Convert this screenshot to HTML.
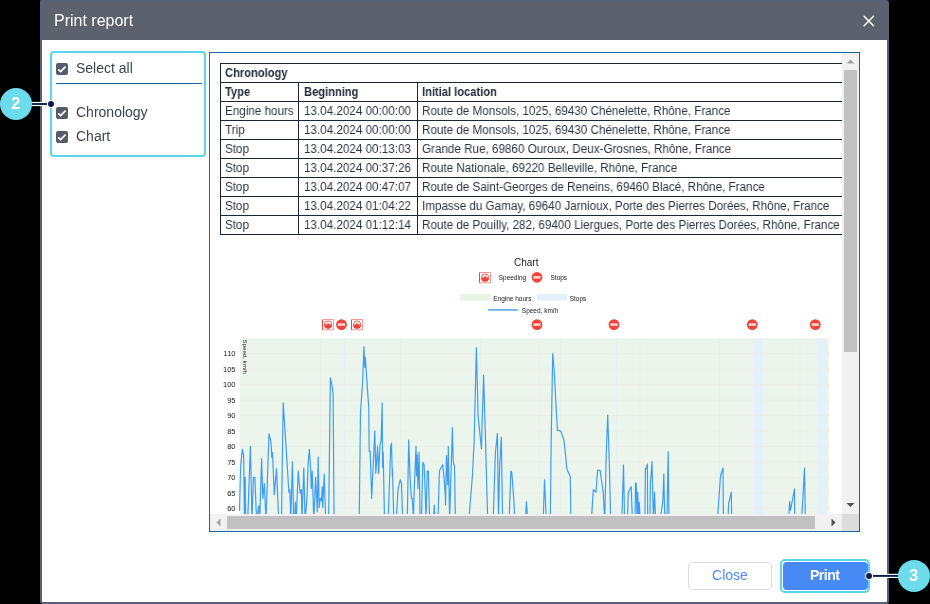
<!DOCTYPE html>
<html><head><meta charset="utf-8">
<style>
*{box-sizing:border-box;margin:0;padding:0}
html,body{width:930px;height:604px;overflow:hidden;background:#000;font-family:"Liberation Sans",sans-serif}
.lbl,.tt,.tb,#title,.btn,svg{will-change:transform}
.abs{position:absolute}
#dlg{position:absolute;left:40px;top:0;width:849px;height:604px;background:#fff;border:2px solid #56617a;border-radius:1px 3px 3px 3px}
#hdr{position:absolute;left:0;top:0;width:845px;height:38px;background:#5c626d}
#title{position:absolute;left:12px;top:9px;font-size:16px;color:#fff;line-height:20px}
#opts{position:absolute;left:50px;top:51px;width:156px;height:106px;border:2px solid #5ad5e9;border-radius:4px}
.cb{position:absolute;width:12px;height:12px;background:#555d6b;border-radius:2px}
.lbl{position:absolute;font-size:14px;color:#3c4350;line-height:16px}
#frame{position:absolute;left:209px;top:52px;width:651px;height:480px;border:1px solid #1565a3;overflow:hidden;background:#fff}
table{border-collapse:collapse;position:absolute;left:10px;top:10px;font-size:12px;color:#1f2a3a}
td,th{border:1px solid #1b2538;height:19px;padding:0 4px;white-space:nowrap;text-align:left;font-weight:400}
th{font-weight:700}
.btn{position:absolute;font-size:14px;text-align:center;border-radius:4px}

#inner{position:absolute;left:-210px;top:-53px;width:930px;height:604px}
.hl{position:absolute;left:220px;width:700px;height:1px;background:#1b2538}
.vl{position:absolute;width:1px;background:#1b2538}
.tt,.tb{position:absolute;height:19px;line-height:20px;font-size:12.3px;color:#2c3444;white-space:nowrap;transform:scaleX(0.948);transform-origin:0 0}
.tb{font-weight:700;transform:scaleX(0.905);color:#222b3a}
.sb{position:absolute;background:#f1f1f1}
</style></head><body>
<div id="dlg">
  <div id="hdr"><div id="title">Print report</div>
    <svg class="abs" style="left:819px;top:12px" width="16" height="16"><path d="M3.1 2.3L12.5 11.7M12.5 2.3L3.1 11.7" stroke="#fff" stroke-width="1.5" stroke-linecap="round"/></svg>
  </div>
</div>
<div id="opts"></div>
<div class="cb" style="left:56px;top:63px"></div><svg class="abs" style="left:56px;top:63px" width="12" height="12"><path d="M2.2 6.4L4.6 8.6L9.6 3.6" fill="none" stroke="#fff" stroke-width="1.8"/></svg>
<div class="lbl" style="left:76px;top:60px">Select all</div>
<div class="abs" style="left:56px;top:83px;width:146px;height:1.4px;background:#1a62a0"></div>
<div class="cb" style="left:56px;top:107px"></div><svg class="abs" style="left:56px;top:107px" width="12" height="12"><path d="M2.2 6.4L4.6 8.6L9.6 3.6" fill="none" stroke="#fff" stroke-width="1.8"/></svg>
<div class="lbl" style="left:76px;top:104px">Chronology</div>
<div class="cb" style="left:56px;top:131px"></div><svg class="abs" style="left:56px;top:131px" width="12" height="12"><path d="M2.2 6.4L4.6 8.6L9.6 3.6" fill="none" stroke="#fff" stroke-width="1.8"/></svg>
<div class="lbl" style="left:76px;top:128px">Chart</div>

<div id="frame"><div id="inner">
<div class="hl" style="top:63px"></div>
<div class="hl" style="top:82px"></div>
<div class="hl" style="top:101px"></div>
<div class="hl" style="top:120px"></div>
<div class="hl" style="top:139px"></div>
<div class="hl" style="top:158px"></div>
<div class="hl" style="top:177px"></div>
<div class="hl" style="top:196px"></div>
<div class="hl" style="top:215px"></div>
<div class="hl" style="top:234px"></div>
<div class="vl" style="left:220px;top:63px;height:172px"></div>
<div class="vl" style="left:298px;top:82px;height:153px"></div>
<div class="vl" style="left:417px;top:82px;height:153px"></div>
<div class="tb" style="left:225px;top:63px">Chronology</div>
<div class="tb" style="left:225px;top:82px">Type</div>
<div class="tb" style="left:304px;top:82px">Beginning</div>
<div class="tb" style="left:422px;top:82px">Initial location</div>
<div class="tt" style="left:225px;top:101px">Engine hours</div>
<div class="tt" style="left:304px;top:101px">13.04.2024 00:00:00</div>
<div class="tt" style="left:422px;top:101px">Route de Monsols, 1025, 69430 Chénelette, Rhône, France</div>
<div class="tt" style="left:225px;top:120px">Trip</div>
<div class="tt" style="left:304px;top:120px">13.04.2024 00:00:00</div>
<div class="tt" style="left:422px;top:120px">Route de Monsols, 1025, 69430 Chénelette, Rhône, France</div>
<div class="tt" style="left:225px;top:139px">Stop</div>
<div class="tt" style="left:304px;top:139px">13.04.2024 00:13:03</div>
<div class="tt" style="left:422px;top:139px">Grande Rue, 69860 Ouroux, Deux-Grosnes, Rhône, France</div>
<div class="tt" style="left:225px;top:158px">Stop</div>
<div class="tt" style="left:304px;top:158px">13.04.2024 00:37:26</div>
<div class="tt" style="left:422px;top:158px">Route Nationale, 69220 Belleville, Rhône, France</div>
<div class="tt" style="left:225px;top:177px">Stop</div>
<div class="tt" style="left:304px;top:177px">13.04.2024 00:47:07</div>
<div class="tt" style="left:422px;top:177px">Route de Saint-Georges de Reneins, 69460 Blacé, Rhône, France</div>
<div class="tt" style="left:225px;top:196px">Stop</div>
<div class="tt" style="left:304px;top:196px">13.04.2024 01:04:22</div>
<div class="tt" style="left:422px;top:196px">Impasse du Gamay, 69640 Jarnioux, Porte des Pierres Dorées, Rhône, France</div>
<div class="tt" style="left:225px;top:215px">Stop</div>
<div class="tt" style="left:304px;top:215px">13.04.2024 01:12:14</div>
<div class="tt" style="left:422px;top:215px">Route de Pouilly, 282, 69400 Liergues, Porte des Pierres Dorées, Rhône, France</div>
<!--CHART-->
<svg class="abs" style="left:0;top:0" width="930" height="604">
<rect x="240" y="338.3" width="589" height="190" fill="#ecf5eb"/>
<rect x="343.8" y="338.3" width="1.0" height="190" fill="#e4f1fb"/>
<rect x="538.8" y="338.3" width="1.0" height="190" fill="#e4f1fb"/>
<rect x="615.8" y="338.3" width="1.0" height="190" fill="#e4f1fb"/>
<rect x="754.3" y="338.3" width="8.9" height="190" fill="#e4f1fb"/>
<rect x="817.9" y="338.3" width="8.4" height="190" fill="#e4f1fb"/>
<rect x="240" y="507.80" width="590" height="1" fill="#eaeee8"/>
<rect x="240" y="492.35" width="590" height="1" fill="#eaeee8"/>
<rect x="240" y="476.90" width="590" height="1" fill="#eaeee8"/>
<rect x="240" y="461.45" width="590" height="1" fill="#eaeee8"/>
<rect x="240" y="446.00" width="590" height="1" fill="#eaeee8"/>
<rect x="240" y="430.55" width="590" height="1" fill="#eaeee8"/>
<rect x="240" y="415.10" width="590" height="1" fill="#eaeee8"/>
<rect x="240" y="399.65" width="590" height="1" fill="#eaeee8"/>
<rect x="240" y="384.20" width="590" height="1" fill="#eaeee8"/>
<rect x="240" y="368.75" width="590" height="1" fill="#eaeee8"/>
<rect x="240" y="353.30" width="590" height="1" fill="#eaeee8"/>
<rect x="320.1" y="338.3" width="1" height="190" fill="#e8efe7"/>
<rect x="400.0" y="338.3" width="1" height="190" fill="#e8efe7"/>
<rect x="479.9" y="338.3" width="1" height="190" fill="#e8efe7"/>
<rect x="559.8" y="338.3" width="1" height="190" fill="#e8efe7"/>
<rect x="639.5" y="338.3" width="1" height="190" fill="#e8efe7"/>
<rect x="719.1" y="338.3" width="1" height="190" fill="#e8efe7"/>
<rect x="799.5" y="338.3" width="1" height="190" fill="#e8efe7"/>
<text x="235.5" y="510.9" text-anchor="end" font-size="7.5" fill="#1a1a1a">60</text>
<text x="235.5" y="495.5" text-anchor="end" font-size="7.5" fill="#1a1a1a">65</text>
<text x="235.5" y="480.0" text-anchor="end" font-size="7.5" fill="#1a1a1a">70</text>
<text x="235.5" y="464.6" text-anchor="end" font-size="7.5" fill="#1a1a1a">75</text>
<text x="235.5" y="449.1" text-anchor="end" font-size="7.5" fill="#1a1a1a">80</text>
<text x="235.5" y="433.7" text-anchor="end" font-size="7.5" fill="#1a1a1a">85</text>
<text x="235.5" y="418.2" text-anchor="end" font-size="7.5" fill="#1a1a1a">90</text>
<text x="235.5" y="402.8" text-anchor="end" font-size="7.5" fill="#1a1a1a">95</text>
<text x="235.5" y="387.3" text-anchor="end" font-size="7.5" fill="#1a1a1a">100</text>
<text x="235.5" y="371.9" text-anchor="end" font-size="7.5" fill="#1a1a1a">105</text>
<text x="235.5" y="356.4" text-anchor="end" font-size="7.5" fill="#1a1a1a">110</text>
<text transform="translate(242.8,339.6) rotate(90)" font-size="6.1" fill="#1a1a1a">Speed, km/h</text>
<clipPath id="pc"><rect x="239" y="338" width="592" height="176"/></clipPath>
<polyline clip-path="url(#pc)" points="239.5,510.8 240.5,468.6 242.3,449.3 243.6,454.9 244.5,520.0 245.2,477.3 245.7,520.0 247.7,520.0 249.2,479.8 250.4,446.2 251.0,471.0 251.9,520.0 253.5,477.3 254.8,477.3 256.6,520.0 258.9,505.8 259.7,520.0 261.6,458.6 262.8,498.4 264.3,483.5 266.0,520.0 269.0,433.8 270.9,441.2 271.8,457.4 272.5,452.4 274.3,494.7 276.5,468.6 278.7,520.0 281.5,520.0 283.2,402.8 285.8,442.5 288.9,492.2 289.9,489.7 290.8,520.0 292.4,461.7 293.7,520.0 294.6,520.0 295.4,502.1 296.2,520.0 298.2,471.0 300.1,493.4 301.4,489.7 302.0,520.0 303.8,468.0 305.1,520.0 306.9,499.6 308.2,461.7 309.4,449.3 310.7,471.0 311.3,488.4 312.2,471.0 313.8,520.0 315.6,477.3 317.3,512.0 318.2,457.0 319.2,507.7 320.2,498.4 321.5,500.9 322.3,486.6 322.7,507.7 324.2,474.2 325.7,520.0 328.6,520.0 330.4,377.8 331.8,384.7 333.1,393.3 334.1,520.0 359.2,520.0 360.5,412.3 362.7,381.3 363.9,346.9 364.8,367.5 365.3,357.2 368.8,408.8 369.2,451.2 370.2,451.2 371.7,498.4 374.8,430.8 375.8,473.5 377.6,446.2 378.6,473.5 380.1,443.7 381.1,441.2 382.2,402.8 382.6,467.3 383.2,452.4 384.5,520.0 388.2,520.0 390.7,446.2 391.5,443.1 392.3,476.0 392.5,468.6 393.8,520.0 396.3,520.0 398.0,489.7 400.2,479.8 401.5,483.5 402.7,520.0 407.3,520.0 408.7,440.0 410.2,479.8 411.4,498.4 412.3,498.4 413.5,520.0 414.1,493.4 416.0,446.2 416.6,476.0 417.3,454.9 417.9,488.4 419.1,452.4 420.1,520.0 421.5,520.0 422.8,462.4 424.1,464.8 425.1,488.4 426.0,520.0 427.2,471.0 428.4,471.0 429.1,502.1 429.7,520.0 433.4,520.0 434.3,505.2 435.0,520.0 438.0,520.0 439.4,471.0 442.7,464.8 444.0,477.3 445.2,493.4 445.6,505.0 446.4,455.5 447.7,484.7 448.3,446.2 449.6,520.0 452.4,427.6 453.3,462.4 454.5,466.1 455.4,520.0 468.8,520.0 472.5,474.8 474.1,442.0 476.4,347.5 478.1,415.5 480.5,440.0 481.5,448.7 482.0,427.6 483.6,375.0 485.5,440.0 487.7,520.0 493.2,520.0 495.4,452.4 497.4,433.6 498.5,520.0 499.7,464.8 501.3,437.0 502.6,520.0 509.1,520.0 510.9,471.0 511.8,472.3 514.0,502.1 514.6,520.0 525.5,520.0 526.4,501.5 527.7,520.0 543.2,520.0 544.5,479.8 546.3,520.0 550.3,520.0 551.2,440.2 552.7,353.6 554.0,368.2 557.4,430.4 560.7,430.9 564.0,440.2 565.9,458.6 566.9,469.2 570.3,476.6 570.9,520.0 591.4,520.0 593.3,489.7 596.0,492.2 597.6,470.4 600.1,470.4 603.2,492.2 604.7,520.0 606.3,452.4 607.7,415.2 609.2,458.6 610.7,520.0 621.8,520.0 623.5,464.8 624.6,520.0 627.4,520.0 628.3,492.2 631.2,486.6 632.4,520.0 635.0,520.0 635.5,482.9 636.2,483.5 637.1,520.0 637.7,492.2 638.7,520.0 639.2,502.1 640.2,520.0 644.9,520.0 645.4,468.6 646.4,468.6 647.4,464.2 647.7,520.0 649.9,520.0 650.4,483.5 652.0,461.7 653.4,520.0 654.5,492.2 655.7,520.0 660.1,520.0 662.8,502.1 663.8,474.2 664.8,520.0 666.9,520.0 668.2,451.8 669.0,520.0 717.4,520.0 720.5,476.0 723.0,468.0 723.4,520.0 728.0,520.0 728.6,503.4 731.3,492.2 731.7,520.0 788.6,520.0 789.6,501.5 790.5,510.2 794.5,489.1 794.8,520.0 801.7,520.0 804.5,468.0 805.4,520.0 829.0,520.0" fill="none" stroke="#3d9df4" stroke-width="1.2" stroke-linejoin="round"/>
</svg>
<svg class="abs" style="left:0;top:0" width="930" height="604" font-family="Liberation Sans">
<text x="526.2" y="266" text-anchor="middle" font-size="10" fill="#222">Chart</text>
<path d="M479.5 272.5V283" stroke="#f0443a" stroke-width="1"/><path d="M479.5 272.5H490.5V282.8H479.5" fill="none" stroke="#f48a83" stroke-width="0.9"/><circle cx="485.1" cy="277.5" r="3.6" fill="#fff" stroke="#f0443a" stroke-width="0.9"/><path d="M481.20000000000005 277.8L483.1 277.6L484.20000000000005 276.9L485.1 275.5L486.0 276.9L487.1 277.6L489.0 277.8A3.9 3.9 0 0 1 481.20000000000005 277.8Z" fill="#f0443a"/>
<text x="498.7" y="280" font-size="6.5" fill="#1a1a1a">Speeding</text>
<circle cx="537" cy="277.3" r="5.4" fill="#f0443a"/><rect x="533.5" y="276.0" width="7" height="2.6" fill="#fde3e1"/><path d="M535.8 276.0V278.6M538.3 276.0V278.6" stroke="#f58a83" stroke-width="0.5"/>
<text x="550.5" y="280" font-size="6.5" fill="#1a1a1a">Stops</text>
<rect x="460" y="294" width="31" height="6.7" fill="#e9f3e8"/>
<text x="493.2" y="300.6" font-size="6.5" fill="#1a1a1a">Engine hours</text>
<rect x="537" y="294" width="30" height="6.7" fill="#e3effa"/>
<text x="569.7" y="300.6" font-size="6.5" fill="#1a1a1a">Stops</text>
<rect x="488.2" y="309" width="29.7" height="1.8" fill="#6fb3f2"/>
<text x="521.8" y="312.8" font-size="6.5" fill="#1a1a1a">Speed, km/h</text>
<path d="M322.5 319.5V330" stroke="#f0443a" stroke-width="1"/><path d="M322.5 319.5H333.5V329.8H322.5" fill="none" stroke="#f48a83" stroke-width="0.9"/><circle cx="328.1" cy="324.5" r="3.6" fill="#fff" stroke="#f0443a" stroke-width="0.9"/><path d="M324.20000000000005 324.8L326.1 324.6L327.20000000000005 323.9L328.1 322.5L329.0 323.9L330.1 324.6L332.0 324.8A3.9 3.9 0 0 1 324.20000000000005 324.8Z" fill="#f0443a"/>
<circle cx="341.5" cy="324.6" r="5.4" fill="#f0443a"/><rect x="338.0" y="323.3" width="7" height="2.6" fill="#fde3e1"/><path d="M340.3 323.3V325.90000000000003M342.8 323.3V325.90000000000003" stroke="#f58a83" stroke-width="0.5"/>
<path d="M351.5 319.5V330" stroke="#f0443a" stroke-width="1"/><path d="M351.5 319.5H362.5V329.8H351.5" fill="none" stroke="#f48a83" stroke-width="0.9"/><circle cx="357.1" cy="324.5" r="3.6" fill="#fff" stroke="#f0443a" stroke-width="0.9"/><path d="M353.20000000000005 324.8L355.1 324.6L356.20000000000005 323.9L357.1 322.5L358.0 323.9L359.1 324.6L361.0 324.8A3.9 3.9 0 0 1 353.20000000000005 324.8Z" fill="#f0443a"/>
<circle cx="537" cy="324.6" r="5.4" fill="#f0443a"/><rect x="533.5" y="323.3" width="7" height="2.6" fill="#fde3e1"/><path d="M535.8 323.3V325.90000000000003M538.3 323.3V325.90000000000003" stroke="#f58a83" stroke-width="0.5"/>
<circle cx="614" cy="324.6" r="5.4" fill="#f0443a"/><rect x="610.5" y="323.3" width="7" height="2.6" fill="#fde3e1"/><path d="M612.8 323.3V325.90000000000003M615.3 323.3V325.90000000000003" stroke="#f58a83" stroke-width="0.5"/>
<circle cx="752.3" cy="324.6" r="5.4" fill="#f0443a"/><rect x="748.8" y="323.3" width="7" height="2.6" fill="#fde3e1"/><path d="M751.0999999999999 323.3V325.90000000000003M753.5999999999999 323.3V325.90000000000003" stroke="#f58a83" stroke-width="0.5"/>
<circle cx="815.3" cy="324.6" r="5.4" fill="#f0443a"/><rect x="811.8" y="323.3" width="7" height="2.6" fill="#fde3e1"/><path d="M814.0999999999999 323.3V325.90000000000003M816.5999999999999 323.3V325.90000000000003" stroke="#f58a83" stroke-width="0.5"/>
</svg>
<!--/CHART-->

<div class="sb" style="left:842px;top:53px;width:17px;height:461px"></div>
<div class="abs" style="left:844px;top:70px;width:13px;height:282px;background:#c1c1c1"></div>
<svg class="abs" style="left:842px;top:53px" width="17" height="17"><path d="M4.5 10.5L8.5 6.5L12.5 10.5Z" fill="#a3a3a3"/></svg>
<svg class="abs" style="left:842px;top:497px" width="17" height="17"><path d="M4.5 6L8.5 10L12.5 6Z" fill="#505050"/></svg>
<div class="sb" style="left:210px;top:514px;width:632px;height:17px"></div>
<div class="abs" style="left:227px;top:516px;width:588px;height:13px;background:#c1c1c1"></div>
<svg class="abs" style="left:210px;top:514px" width="17" height="17"><path d="M10.5 4.5L6.5 8.5L10.5 12.5Z" fill="#a3a3a3"/></svg>
<svg class="abs" style="left:825px;top:514px" width="17" height="17"><path d="M6.5 4.5L10.5 8.5L6.5 12.5Z" fill="#505050"/></svg>
<div class="abs" style="left:842px;top:514px;width:17px;height:17px;background:#dcdcdc"></div>
</div></div>

<div class="btn" style="left:688px;top:562px;width:84px;height:28px;border:1px solid #dddddd;color:#4a8af4;line-height:24px">Close</div>
<div class="abs" style="left:780px;top:559px;width:90px;height:34px;border:2px solid #5ad5e9;border-radius:5px"></div>
<div class="btn" style="left:783px;top:562px;width:85px;height:28px;background:#4789f5;color:#fff;line-height:27px;font-weight:700;letter-spacing:-0.45px;text-indent:-1.5px">Print</div>

<svg class="abs" style="left:0;top:0" width="930" height="604">
<path d="M31 104H47" stroke="#fff" stroke-width="4.2"/>
<path d="M31 104H47" stroke="#0b1d4a" stroke-width="1.9"/>
<circle cx="51" cy="104" r="4" fill="#fff"/>
<circle cx="51" cy="104" r="3" fill="#0b1d4a"/>
<circle cx="16" cy="104" r="16" fill="#6cdcec"/>
<text x="15.8" y="109.2" text-anchor="middle" font-size="16" font-weight="700" fill="#fff" font-family="Liberation Sans">2</text>
<path d="M873 575.9H899" stroke="#fff" stroke-width="4.2"/>
<path d="M873 575.9H899" stroke="#0b1d4a" stroke-width="1.9"/>
<circle cx="869" cy="575.9" r="4" fill="#fff"/>
<circle cx="869" cy="575.9" r="3" fill="#0b1d4a"/>
<circle cx="914" cy="575.9" r="16" fill="#6cdcec"/>
<text x="913.8" y="581.3" text-anchor="middle" font-size="16" font-weight="700" fill="#fff" font-family="Liberation Sans">3</text>
</svg>
</body></html>
